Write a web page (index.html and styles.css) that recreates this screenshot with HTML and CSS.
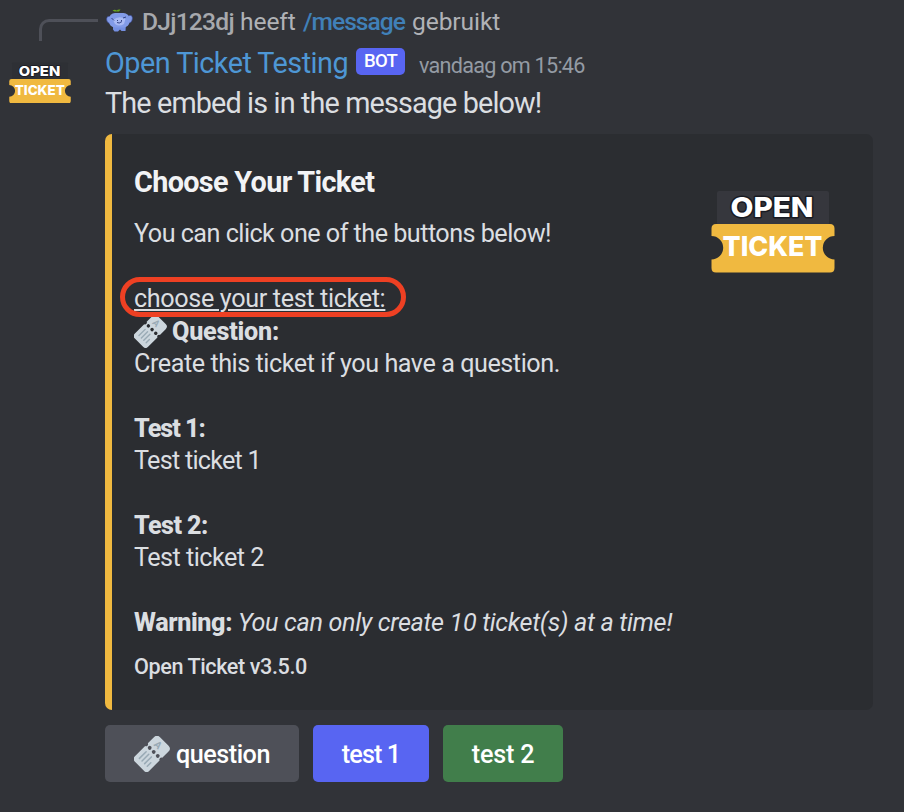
FILE: index.html
```html
<!DOCTYPE html>
<html lang="nl">
<head>
<meta charset="utf-8">
<title>Open Ticket Testing</title>
<link rel="stylesheet" href="styles.css">
</head>
<body>
<svg class="defs" aria-hidden="true">
  <symbol id="logo" viewBox="0 0 124 83">
    <rect class="logo-plate" x="6" y="1" width="112" height="34" rx="2"/>
    <path class="logo-ticket" d="M5 34H119Q123.500 34 123.500 38.500V46A11.700 11.700 0 0 0 123.500 69.400V78Q123.500 82.500 119 82.500H5Q.5 82.500 .5 78V69.400A11.700 11.700 0 0 0 .5 46V38.500Q.5 34 5 34Z"/>
    <text class="logo-open" x="19.500" y="27" textLength="83" lengthAdjust="spacingAndGlyphs">OPEN</text>
    <text class="logo-text" x="11.500" y="66" textLength="100" lengthAdjust="spacingAndGlyphs">TICKET</text>
  </symbol>
  <symbol id="ticket" viewBox="0 0 36 36">
    <g transform="translate(17.800 17.800) rotate(-45)">
      <path fill="#ccd6dd" d="M-14 -10.200H.8A2 2 0 0 0 4.600 -10.200H13.500Q17.500 -10.200 17.500 -6.200V6.200Q17.500 10.200 13.500 10.200H4.600A2 2 0 0 0 .8 10.200H-14Q-17.500 10.200 -17.500 6.700V-6.700Q-17.500 -10.200 -14 -10.200Z"/>
      <g class="ticket-hole"><circle cx="2.700" cy="-5.700" r="1.900"/><circle cx="2.700" cy="0" r="1.900"/><circle cx="2.700" cy="5.700" r="1.900"/></g>
      <path stroke="#99aab5" stroke-width="1.500" stroke-linecap="round" d="M-12 -5.500H-2.500M-12 -1.800H-2.500M-12 1.900H-2.500M-12 5.600H-7"/>
    </g>
    <text class="ticket-letter" transform="translate(24.300 8.700) rotate(45)" x="0" y="3.600" text-anchor="middle">A</text>
  </symbol>
</svg>

<main class="message">
  <div class="gutter">
    <div class="spine"></div>
    <svg class="avatar"><use href="#logo"/></svg>
  </div>
  <div class="content">
    <div class="reply">
      <svg class="reply-avatar" viewBox="0 0 27 23">
        <path d="M6.500 1.500Q9 0 10.500 1.500Q12 0 14.500 .5L13 2.500H8.500Z" fill="#68a51d"/>
        <path d="M5 8Q1 6 .5 10Q1 15 5 14ZM22 7Q26 5 26.500 9Q26 15 21 14Z" fill="#829be8" stroke="#3b4b91" stroke-width=".7"/>
        <path d="M7 15H20L19.500 22H15.500L14 20.500L12 22.500H8.500L7 20.500Z" fill="#7590e2"/>
        <rect x="3" y="4" width="20.500" height="14.500" rx="6" fill="#829be8"/>
        <path d="M7 11Q13 6 19.500 10L18 15Q13 18 9 15Z" fill="#a9baf4"/>
        <path d="M5.500 9L8 11.500M17 9L20 8M11 13.500Q13 15 16 12.500" fill="none" stroke="#344385" stroke-width="1"/>
        <path d="M11 11.500H12M15 11.500H16" stroke="#344385"/>
      </svg>
      <span class="user">DJj123dj</span><span class="verb">heeft</span><span class="command">/message</span><span class="used">gebruikt</span>
    </div>
    <div class="header">
      <span class="name">Open Ticket Testing</span>
      <span class="bot">BOT</span>
      <span class="time">vandaag om 15:46</span>
    </div>
    <div class="text">The embed is in the message below!</div>
    <article class="embed">
      <div class="embed-body">
        <h2 class="title">Choose Your Ticket</h2>
        <div class="description">
          <p>You can click one of the buttons below!</p>
          <p class="blank"></p>
          <p><span class="marked">choose your test ticket:</span></p>
          <p class="with-emoji"><svg class="emoji"><use href="#ticket"/></svg><b class="question">Question:</b></p>
          <p class="create">Create this ticket if you have a question.</p>
          <p class="blank"></p>
          <p><b class="test-title one">Test 1:</b></p>
          <p class="one">Test ticket 1</p>
          <p class="blank"></p>
          <p><b class="test-title">Test 2:</b></p>
          <p>Test ticket 2</p>
          <p class="blank"></p>
          <p class="warning"><b>Warning:</b><em>You can only create 10 ticket(s) at a time!</em></p>
        </div>
        <div class="footer">Open Ticket v3.5.0</div>
      </div>
      <svg class="thumbnail"><use href="#logo"/></svg>
    </article>
    <div class="buttons">
      <button class="button secondary"><svg class="button-emoji"><use href="#ticket"/></svg><span>question</span></button>
      <button class="button primary">test 1</button>
      <button class="button success">test 2</button>
    </div>
  </div>
</main>
</body>
</html>
```
FILE: styles.css
```css
*, *::after { box-sizing: border-box; }
body {
  margin: 0;
  background: #313338;
  color: #dbdee1;
  font-family: Roboto, "Liberation Sans", sans-serif;
  font-size: 25.2px;
}
h2, p { margin: 0; }
svg { display: block; flex: none; }
.defs { position: absolute; width: 0; height: 0; }

.message { display: flex; height: 812px; padding-top: 2px; overflow: hidden; white-space: nowrap; }
.gutter { width: 105px; flex: none; }
.spine {
  width: 59px;
  height: 22px;
  margin: 17px 0 0 39px;
  border: solid #4e5058;
  border-width: 3px 0 0 3px;
  border-top-left-radius: 10px;
}
.avatar { width: 62px; height: 41.5px; margin: 20.5px 0 0 9px; --plate: #2e3035; }
.content { width: 768px; flex: none; }

.reply { display: flex; align-items: center; height: 39px; color: #b0b2b6; font-size: 24.6px; }
.reply-avatar { width: 27px; height: 23px; margin: 0 9px 2px 1px; }
.user { width: 98px; letter-spacing: -0.75px; color: #a7a9ad; font-weight: 500; }
.verb { width: 63px; letter-spacing: -0.1px; }
.command { width: 109px; color: #4080b8; letter-spacing: -1px; font-weight: 500; }
.used { letter-spacing: -0.1px; }

.header { display: flex; align-items: center; height: 42px; padding-top: 1px; }
.name { width: 251px; color: #4e97d5; font-size: 28.8px; letter-spacing: -0.52px; }
.bot {
  width: 49px;
  height: 27px;
  margin-bottom: 2px;
  border-radius: 5px;
  background: #5865f2;
  color: #fff;
  font-size: 18.5px;
  font-weight: 500;
  line-height: 26px;
  text-align: center;
  letter-spacing: -0.8px;
}
.time { margin: 5px 0 0 14px; color: #949ba4; font-size: 21.6px; letter-spacing: -0.74px; }
.text { height: 40px; font-size: 28.8px; line-height: 40px; letter-spacing: -0.87px; }

.embed {
  display: flex;
  justify-content: space-between;
  height: 576px;
  margin-top: 11px;
  padding: 28px 38px 0 22px;
  border-left: 7px solid #f0b940;
  border-radius: 7px;
  background: #2b2d31;
}
.title { color: #f2f3f5; font-size: 28.8px; font-weight: 700; line-height: 41px; letter-spacing: -0.66px; }
.description { margin-top: 15.4px; line-height: 32.4px; letter-spacing: -0.53px; }
.description p { height: 32.4px; }
.description b { font-weight: 800; }
.marked {
  position: relative;
  letter-spacing: -0.36px;
  text-decoration: underline;
  text-decoration-thickness: 2px;
  text-underline-offset: 2px;
}
.marked::after {
  content: "";
  position: absolute;
  z-index: 1;
  top: -7px;
  left: -14px;
  width: 286px;
  height: 40px;
  border: 5px solid #ee4023;
  border-radius: 20px;
}
.with-emoji { display: flex; align-items: center; --hole: #2b2d31; }
.emoji { width: 33px; height: 33px; margin-right: 5px; }
.question { letter-spacing: -0.25px; }
.create { letter-spacing: -0.46px; }
.test-title { letter-spacing: -0.6px; }
.one { letter-spacing: -0.75px; }
.test-title.one { letter-spacing: -1px; }
.warning b { display: inline-block; width: 104px; letter-spacing: -0.4px; }
.warning em { letter-spacing: -0.35px; }
.footer { margin-top: 11.8px; font-size: 21.6px; line-height: 32px; letter-spacing: -0.4px; font-weight: 500; }
.thumbnail { width: 124px; height: 83px; margin-top: 28px; --plate: #36373d; }

.buttons { display: flex; gap: 14px; margin-top: 15px; }
.button {
  display: flex;
  align-items: center;
  justify-content: center;
  height: 57px;
  padding: 2px 0 0;
  border: 0;
  border-radius: 5px;
  color: #fff;
  font: 500 25.2px Roboto, "Liberation Sans", sans-serif;
  letter-spacing: -0.5px;
}
.secondary { width: 194px; gap: 6px; background: #4e5058; --hole: #4e5058; }
.primary { width: 116px; background: #5865f2; letter-spacing: -0.9px; }
.success { width: 120px; background: #417e4b; letter-spacing: -0.2px; }
.button-emoji { width: 36px; height: 36px; margin-top: -2px; }

.logo-plate { fill: var(--plate); }
.logo-ticket { fill: #f0b940; }
.logo-open, .logo-text { fill: #fff; font: 800 27.5px Inter, "Liberation Sans", sans-serif; letter-spacing: 0; }
.logo-open { stroke: #181a22; stroke-width: 3px; stroke-linejoin: round; paint-order: stroke; }
.ticket-hole { fill: var(--hole); }
.ticket-letter { fill: #99aab5; font: 700 10px Roboto, sans-serif; letter-spacing: 0; }
```
